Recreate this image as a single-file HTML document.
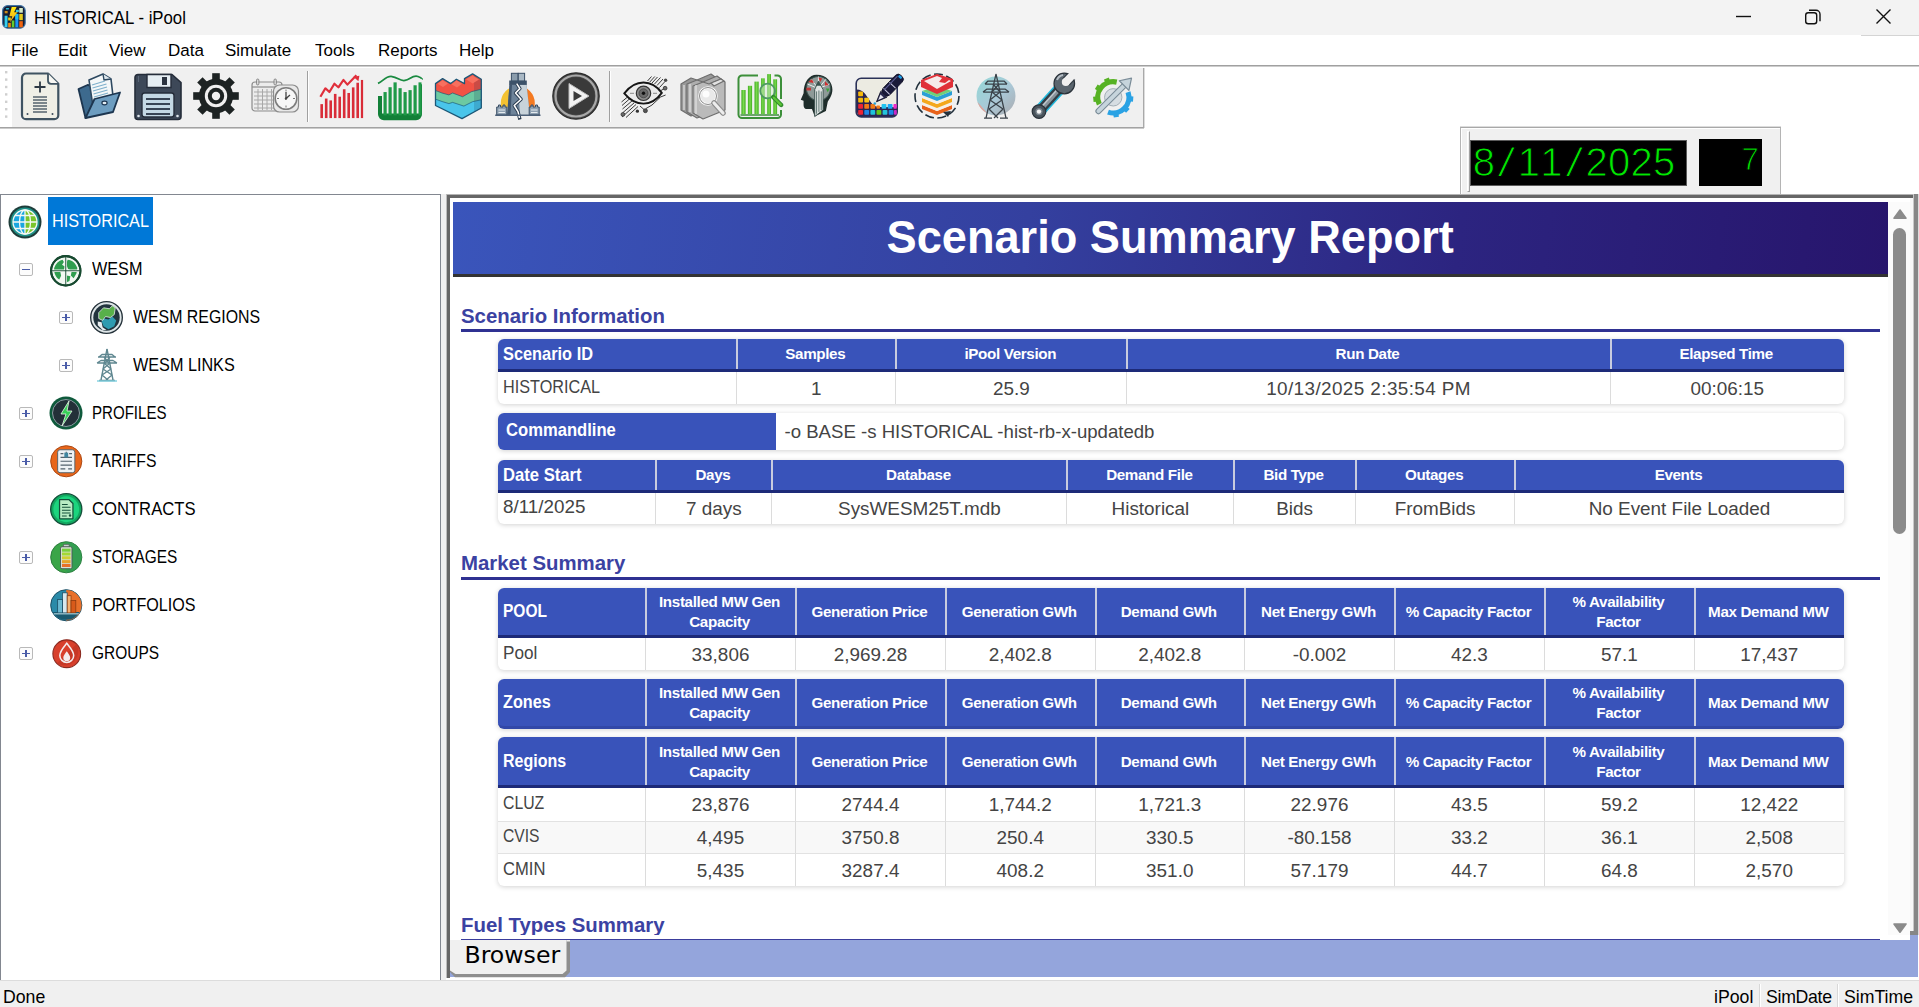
<!DOCTYPE html>
<html lang="en">
<head>
<meta charset="utf-8">
<title>HISTORICAL - iPool</title>
<style>
*{box-sizing:border-box;margin:0;padding:0}
html,body{width:1919px;height:1007px;overflow:hidden;background:#fff}
body{position:relative;font-family:"Liberation Sans",sans-serif;color:#000}
.abs{position:absolute}
/* ---------- title bar ---------- */
#titlebar{left:0;top:0;width:1919px;height:35px;background:#f3f3f3}
#titlebar .ttl{left:34px;top:7px;font-size:18.800px;transform:scaleX(.893);transform-origin:0 50%;line-height:22px;color:#000;white-space:nowrap}
/* ---------- menu ---------- */
#menubar{left:0;top:35px;width:1919px;height:30px;background:#fff}
#menubar span{position:absolute;top:3.600px;font-size:17.400px;transform:scaleX(.977);transform-origin:0 50%;line-height:22px;white-space:nowrap}
#menuline{left:0;top:65px;width:1919px;height:3px;background:linear-gradient(#a0a0a0 0,#a0a0a0 1px,#cdcdcd 1px,#cdcdcd 2px,#fff 2px,#fff 3px)}
/* ---------- toolbar ---------- */
#toolbar{left:0;top:68px;width:1144px;height:60px;background:#f0f0f0;border-right:1px solid #a9a9a9;border-bottom:1px solid #a3a3a3;box-shadow:0 1px 0 #cbcbcb,1px 0 0 #dcdcdc}
.ic{position:absolute;top:4px;width:48px;height:48px;overflow:visible}
.sep{position:absolute;top:3px;width:2px;height:51px;background:#a0a0a0;border-right:1px solid #fff}
/* ---------- LED ---------- */
#ledbox{left:1460px;top:126.500px;width:321px;height:68.500px;background:#f0f0f0;border-top:1px solid #a8a8a8;border-left:1px solid #b4b4b4;border-right:1px solid #b4b4b4;box-shadow:inset 1px 1px 0 #fff,0 -1px 0 #dcdcdc}
.led{background:#000;border:1px solid #5a5a5a;white-space:nowrap;overflow:hidden;font-size:0}
.led b{display:inline-block;width:22.550px;text-align:center;font-weight:normal;font-size:40px;line-height:43px;color:#00e800;-webkit-text-stroke:1px #000;vertical-align:top}
.led b.sm{font-size:31px;width:18px;line-height:42px}
.led b.sl{transform:skewX(-9deg) scaleX(1.15)}
/* ---------- left tree ---------- */
#tree{left:0;top:194px;width:441px;height:787px;background:#fff;border:1px solid #828790}
.node{position:absolute;margin:2px 0 0 1px;font-size:18px;line-height:22px;white-space:nowrap;color:#000}
.node i{font-style:normal;display:inline-block;transform:scaleX(.9);transform-origin:0 50%}
.ti{position:absolute;width:34px;height:34px;overflow:visible;margin:2px 0 0 1px}
.xb{position:absolute;width:13.400px;height:13.400px;border:1px solid #b9b9b9;border-radius:2px;background:#fcfcfc;margin:1px 0 0 .300px}
.xb .h{position:absolute;left:2px;top:5px;width:7.400px;height:1.400px;background:#4a5ca8}
.xb .v{position:absolute;left:5px;top:2px;width:1.400px;height:7.400px;background:#4a5ca8}
/* ---------- right panel ---------- */
#right{left:446px;top:194px;width:1473px;height:787px;background:#fff;border-style:solid;border-width:4px 0 0 4px;border-color:#666}
#rhead{left:3px;top:4px;width:1435px;height:75px;border-bottom:3px solid #333;background:linear-gradient(97deg,#3a55bb 0%,#34409f 40%,#2c2480 70%,#27156c 100%);color:#fff;text-align:center;font-weight:bold;font-size:47px;line-height:70px;white-space:nowrap}
#rhead span{display:inline-block;transform:scaleX(.961)}
.sec{position:absolute;left:11px;font-size:20.400px;line-height:28px;font-weight:bold;color:#3b42a2;white-space:nowrap}
.secline{position:absolute;left:11px;width:1419px;height:3px;background:#2f3192}
.rt{position:absolute;left:47.500px;width:1346px;border-collapse:separate;border-spacing:0;table-layout:fixed;border-radius:6px;box-shadow:0 1px 5px rgba(0,0,0,.18);background:#fff}
.rt th{background:#3953ba;color:#fff;font-weight:bold;font-size:15.200px;letter-spacing:-.35px;line-height:20px;text-align:center;padding:0 1px 0 0;border-bottom:3px solid #1d2a78;box-shadow:inset 2px 0 0 #c8ccdf;vertical-align:middle;white-space:nowrap}
.rt th.l{text-align:left;padding-left:5px;letter-spacing:0;font-size:17.800px;box-shadow:none;border-top-left-radius:6px}
.sx{display:inline-block;transform-origin:0 50%;white-space:nowrap}
.rt th:last-child{border-top-right-radius:6px}
.rt .h1 th{height:33.100px}
.rt .h2 th{height:50.100px;padding-top:2px}
.rt .h3 th{height:50.800px;padding-top:2px}
.rt .h2 th.l,.rt .h3 th.l{padding-top:0}
.rt.only th{border-bottom:3px solid #3248a8}
.rt.only th.l{border-bottom-left-radius:6px}
.rt.only th:last-child{border-bottom-right-radius:6px}
.rt td{height:31.300px;font-size:18.900px;line-height:22px;color:#444;text-align:center;padding:1.500px 0 0;border-left:1px solid #dcdcdc;white-space:nowrap;vertical-align:middle}
.rt td.l{text-align:left;padding:0 0 2px 5px;border-left:none}
.rt .r3 td{height:32.600px;border-top:1px solid #e2e2e2}
.rt .r3:nth-child(2) td{border-top:none}
.rt .alt td{background:#f8f8f8}
.rt.pool td{height:31.800px}
.cmd{position:absolute;left:47.500px;width:1346px;height:37px;border-radius:6px;box-shadow:0 1px 5px rgba(0,0,0,.18);background:#fff}
.cmd .cl{position:absolute;left:0;top:0;width:278px;height:37px;background:#3953ba;border-radius:6px 0 0 6px;color:#fff;font-weight:bold;font-size:17.800px;line-height:35px;padding-left:8px}
.cmd .cv{position:absolute;left:287px;top:0;font-size:18.600px;line-height:38px;color:#444;white-space:nowrap}
#tabbar{left:0;top:737px;width:1468px;height:42px;background:#94a5dc}
.tab{position:absolute;left:14.500px;top:4.600px;font-family:"DejaVu Sans","Liberation Sans",sans-serif;font-size:23.600px;line-height:30px;color:#000;white-space:nowrap}
/* ---------- status ---------- */
#status{left:0;top:980px;width:1919px;height:27px;background:#f0f0f0;border-top:1px solid #dcdcdc}
#status span{position:absolute;top:5px;font-size:17.700px;line-height:22px;white-space:nowrap}
#status i{position:absolute;top:3px;width:2px;height:23px;background:#d8d8d8;border-right:1px solid #fff}
</style>
</head>
<body>
<div id="titlebar" class="abs"><svg class="abs" style="left:2.200px;top:5px" width="23.800" height="23.800" viewBox="0 0 24 24"><defs><linearGradient id="ab" x1="0" y1="0" x2="0" y2="1"><stop offset="0" stop-color="#ffe812"/><stop offset="1" stop-color="#f5a614"/></linearGradient></defs><rect x=".6" y=".6" width="22.800" height="22.800" rx="5.200" fill="#151c33" stroke="#3f73a4" stroke-width="1.200"/><rect x="2.600" y="10.800" width="3" height="11.400" fill="#34d0f0"/><rect x="6.200" y="12.600" width="2.700" height="3" fill="#e8cc18"/><rect x="6.200" y="18" width="2.700" height="4.500" fill="#f08a12"/><rect x="9.800" y="15.600" width="2.700" height="6.900" fill="#62cc30"/><rect x="13.400" y="9" width="3.100" height="13.500" fill="#1c94f6"/><rect x="13.400" y="9" width="3.100" height="5.500" fill="#22bdf0"/><rect x="17.400" y="3" width="3.600" height="4.800" fill="#d6ebc6"/><rect x="17.400" y="9" width="3.600" height="6.300" fill="#e6cc1c"/><rect x="17.400" y="16.300" width="3.600" height="6.200" fill="#f0640f"/><rect x="3.800" y="3" width="3.400" height="1.500" rx=".7" fill="#2ab8d0"/><rect x="2.700" y="6" width="3" height="2.400" fill="#c88a18"/><rect x="14" y="4.800" width="3" height="2.600" rx=".8" fill="#3ccfe0"/><path d="M9.800 2.100h4.900l-2.500 5.300h3.400l-7.800 10.600 2.600-6.600h-3z" fill="url(#ab)"/></svg><div class="abs ttl">HISTORICAL - iPool</div>
<svg class="abs" style="left:1730px;top:4px" width="170" height="26" viewBox="0 0 170 26"><g fill="none" stroke="#111" stroke-width="1.400"><path d="M6 12.500h15"/><rect x="75.700" y="8.700" width="11" height="11" rx="2.500"/><path d="M79 6.200h7a4 4 0 0 1 4 4v7"/><path d="M146.500 5.500l14 14M160.500 5.500l-14 14"/></g></svg></div>
<div id="menubar" class="abs">
<span style="left:11px">File</span><span style="left:58px">Edit</span><span style="left:109px">View</span><span style="left:168px">Data</span><span style="left:225px">Simulate</span><span style="left:315px">Tools</span><span style="left:378px">Reports</span><span style="left:459px">Help</span>
</div>
<div class="abs" style="left:1861px;top:35px;width:58px;height:1px;background:#d4d4d4"></div>
<div id="menuline" class="abs"></div>
<div id="toolbar" class="abs">
<div class="abs" style="left:0;top:0;width:12px;height:59px;background:#fff"></div>
<svg class="abs" style="left:2px;top:.200px" width="8" height="56" viewBox="0 0 8 56"><g fill="#cfcfcf"><rect x="3" y="3" width="2.4" height="2.4"/><rect x="3" y="10.4" width="2.4" height="2.4"/><rect x="3" y="17.8" width="2.4" height="2.4"/><rect x="3" y="25.2" width="2.4" height="2.4"/><rect x="3" y="32.6" width="2.4" height="2.4"/><rect x="3" y="40" width="2.4" height="2.4"/><rect x="3" y="47.4" width="2.4" height="2.4"/></g></svg>
<!-- 1 new doc -->
<svg class="ic" style="left:16.4px" viewBox="0 0 48 48"><path d="M10 1.500h22l10.300 10.300v31.400a4 4 0 0 1-4 4H10a4 4 0 0 1-4-4V5.500a4 4 0 0 1 4-4z" fill="#efefe6" stroke="#3f5361" stroke-width="2.200" stroke-linejoin="round"/><path d="M32 1.500v7.300a3 3 0 0 0 3 3h7.300" fill="#f8f8f4" stroke="#3f5361" stroke-width="1.800" stroke-linejoin="round"/><path d="M24 9.500v11M18.500 15h11" stroke="#2d3944" stroke-width="1.800"/><g stroke="#56646e" stroke-width="1.400"><path d="M17 25h14M17 28h14M17 31h14M17 34h14M17 37h14M17 40h14"/></g><circle cx="11.5" cy="42" r="1" fill="#3b4a5a"/><circle cx="36.500" cy="42" r="1" fill="#3b4a5a"/></svg>
<!-- 2 open folder -->
<svg class="ic" style="left:75px" viewBox="0 0 48 48"><path d="M3.500 17l9-4 6 1 3 28-11 4z" fill="#3d6a8e" stroke="#1d3650" stroke-width="1.8" stroke-linejoin="round"/><path d="M14 8l14-6 8 5 3 26-20 8z" fill="#f4f7f8" stroke="#2d4860" stroke-width="1.6" stroke-linejoin="round"/><path d="M28 2l1 6 7-1" fill="#dfe8ee" stroke="#2d4860" stroke-width="1.4" stroke-linejoin="round"/><g stroke="#7fb0cc" stroke-width="1.3"><path d="M17 13l13-4M17.500 16l14-4M18 19l14-4M18.500 22l14-4M19 25l14-4M19.500 28l14-4"/></g><path d="M10.500 46l9-19 25.500-6.500-7 19.500z" fill="#6d9dc0" stroke="#1d3650" stroke-width="1.8" stroke-linejoin="round"/><ellipse cx="29.500" cy="31" rx="2.600" ry="1.800" fill="#e4edf3" stroke="#1d3650" stroke-width="1.2"/></svg>
<!-- 3 floppy -->
<svg class="ic" style="left:133.600px" viewBox="0 0 48 48"><path d="M4 2.500h34l9 8v34a3 3 0 0 1-3 3H4a3 3 0 0 1-3-3v-39a3 3 0 0 1 3-3z" fill="#3d4858" stroke="#252d3a" stroke-width="1.6" stroke-linejoin="round"/><path d="M13 2.500h24v13H13z" fill="#e6eef3" stroke="#252d3a" stroke-width="1.4"/><rect x="28" y="5" width="5" height="8" fill="#2b3340"/><rect x="8" y="21" width="32" height="24" rx="2.500" fill="#c4d8e4" stroke="#252d3a" stroke-width="1.4"/><g stroke="#384454" stroke-width="1.800"><path d="M12 27h24M12 32h24M12 37h24M12 42h24"/></g><circle cx="4.500" cy="44" r="1.300" fill="#dfe6ec"/><circle cx="43.500" cy="44" r="1.300" fill="#dfe6ec"/><path d="M4.500 4v6" stroke="#596678" stroke-width="1"/></svg>
<!-- 4 gear -->
<svg class="ic" style="left:192.200px" viewBox="0 0 48 48"><g fill="#1d2323"><g transform="translate(24 24)"><rect x="-3.800" y="-22.800" width="7.600" height="45.600"/><rect x="-3.800" y="-22.800" width="7.600" height="45.600" transform="rotate(45)"/><rect x="-3.800" y="-22.800" width="7.600" height="45.600" transform="rotate(90)"/><rect x="-3.800" y="-22.800" width="7.600" height="45.600" transform="rotate(135)"/><circle r="17.200"/></g></g><circle cx="24" cy="24" r="11.200" fill="#f0f0f0"/><circle cx="24" cy="24" r="8.200" fill="#1d2323"/><circle cx="24" cy="24" r="4.200" fill="#f0f0f0"/></svg>
<!-- 5 calendar clock -->
<svg class="ic" style="left:250.800px" viewBox="0 0 48 48"><rect x="1" y="10" width="30" height="29" rx="3" fill="#ececec" stroke="#8b8b8b" stroke-width="1.2"/><path d="M1 15h30" stroke="#8b8b8b" stroke-width="1.200"/><g stroke="#a8a8a8" stroke-width="1"><path d="M3 20h26M3 24h26M3 28h26M3 32h26M3 36h26M7 17v21M11.500 17v21M16 17v21M20.500 17v21"/></g><rect x="5.500" y="7" width="2.400" height="6" rx="1.200" fill="#d8d8d8" stroke="#777" stroke-width=".8"/><rect x="23" y="7" width="2.400" height="6" rx="1.200" fill="#d8d8d8" stroke="#777" stroke-width=".8"/><rect x="22.500" y="13" width="25" height="27" rx="6" fill="#e8e8e8" stroke="#8b8b8b" stroke-width="1.200"/><circle cx="35" cy="26.500" r="10.800" fill="#f7f7f7" stroke="#7c7c7c" stroke-width="1.500"/><g stroke="#777" stroke-width="1"><path d="M35 17.500v2M35 33.500v2M26 26.500h2M42 26.500h2"/></g><path d="M35 20v6.500l4-3.500" fill="none" stroke="#444" stroke-width="1.300"/><circle cx="35" cy="26.500" r="1.200" fill="#444"/></svg>
<div class="sep" style="left:307px"></div>
<!-- 6 red chart -->
<svg class="ic" style="left:317.200px" viewBox="0 0 48 48"><g transform="translate(1.400 3.300) scale(1 .93)"><g fill="#d92c38"><rect x="2" y="31" width="2.600" height="15"/><rect x="6.500" y="25" width="2.600" height="21"/><rect x="11" y="27" width="2.600" height="19"/><rect x="15.500" y="20" width="2.600" height="26"/><rect x="20" y="23" width="2.600" height="23"/><rect x="24.500" y="15" width="2.600" height="31"/><rect x="29" y="19" width="2.600" height="27"/><rect x="33.500" y="13" width="2.600" height="33"/><rect x="38" y="8" width="2.600" height="38"/><rect x="42.500" y="5" width="2.200" height="41"/></g><path d="M2 23l5-9 4 4 5-9 4 4 5-8 4 5 9-10" fill="none" stroke="#e02f3b" stroke-width="2.200" stroke-linejoin="round"/><path d="M35 1.500l6-1-1 6z" fill="#e02f3b"/></g></svg>
<!-- 7 green chart -->
<svg class="ic" style="left:375.800px" viewBox="0 0 48 48"><g transform="translate(0 2.600) scale(1 .97)"><path d="M2 22h4v18h37V10h3v31a6 6 0 0 1-6 6H8a6 6 0 0 1-6-6z" fill="#128038"/><g fill="#1f9a48"><rect x="7.500" y="18" width="3.200" height="24"/><rect x="12.500" y="13" width="3.200" height="29"/><rect x="17.500" y="8" width="3.200" height="34"/><rect x="22.500" y="14" width="3.200" height="28"/><rect x="27.500" y="18" width="3.200" height="24"/><rect x="32.500" y="16" width="3.200" height="26"/><rect x="37.500" y="11" width="3.200" height="31"/><rect x="42.500" y="8" width="3" height="34"/></g><path d="M2 9c5-2 8-8 14-7s8 5 13 4 8-6 13-4 4 3 4 3" fill="none" stroke="#1a8a40" stroke-width="1.800"/></g></svg>
<!-- 8 layers -->
<svg class="ic" style="left:434.400px" viewBox="0 0 48 48"><defs><clipPath id="c8"><path d="M1.500 11.600L8.600 6.600 16.700 11.600 22.400 7.200 30.500 11.600V6.600L38.600 1.900 47.300 7.200V36L28 46.600 1.500 33.500z"/></clipPath></defs><g clip-path="url(#c8)"><rect width="48" height="48" fill="#f15244"/><path d="M0 17.900L8 21 14.900 22.900 18.600 21 28.600 24.700 37.400 19.700 48 17V48H0z" fill="#6cc9a2"/><path d="M0 26.600L8 29.500 14.900 31.600 18.600 30.400 29.900 34.100 38.600 29.700 48 27.600V48H0z" fill="#49c5ea"/><path d="M40 0H48V48H40z" fill="#0a2a50" opacity=".17"/><path d="M3.500 11.800L8.600 8.200 14 11.400 9 15z" fill="#f7705f"/><path d="M17.500 12.200L22.400 8.600 28 11.800 23 15.500z" fill="#f7705f"/><path d="M32 7.200L38.600 3.400 45 7.400 38.600 11.400z" fill="#f7705f"/><path d="M0 17.900L8 21 14.900 22.900 18.600 21 28.600 24.700 37.400 19.700 48 17M0 26.600L8 29.500 14.900 31.600 18.600 30.400 29.900 34.100 38.600 29.700 48 27.600" fill="none" stroke="#1d5878" stroke-width=".9" opacity=".75"/></g><path d="M1.500 11.600L8.600 6.600 16.700 11.600 22.400 7.200 30.500 11.600V6.600L38.600 1.900 47.300 7.200V36L28 46.600 1.500 33.500z" fill="none" stroke="#1d5878" stroke-width="1.300" stroke-linejoin="round"/></svg>
<!-- 9 dam tower -->
<svg class="ic" style="left:493px" viewBox="0 0 48 48"><path d="M24.800 14a17 17 0 0 0-17 17c0 2 .3 3 .6 4.500H24.800z" fill="#f4c232"/><path d="M24.800 14a17 17 0 0 1 17 17c0 2-.3 3-.6 4.500H24.800z" fill="#f47a22"/><path d="M16.500 12.500H33.500L36.900 43H14.100z" fill="#6d8399"/><path d="M25 12.500H33.500L36.900 43H27z" fill="#c8d3da"/><path d="M14.100 43L16.500 12.500H19L17.500 43z" fill="#40566e"/><rect x="18.400" y="1.300" width="6.600" height="8" fill="#8a9cac" stroke="#3a4f66" stroke-width="1"/><rect x="25.300" y="1.300" width="6.300" height="8" fill="#a9b8c4" stroke="#3a4f66" stroke-width="1"/><rect x="16.200" y="8.500" width="17.600" height="4.400" fill="#3c5269"/><path d="M23.700 11.600L26.900 16.600 22.500 21 28.100 27.200 21.200 33.500 25 39.700 26.900 47.500" fill="none" stroke="#2a3c50" stroke-width="3.400" stroke-linejoin="round"/><path d="M23.700 11.600L26.900 16.600 22.500 21 28.100 27.200 21.200 33.500 25 39.700 26.500 46" fill="none" stroke="#fff" stroke-width="1.500" stroke-linejoin="round"/><path d="M3.700 43V35H5.500V33H7.500V35H10V33H12V35H13.800V43z" fill="#8fa1b2" stroke="#3a4f66" stroke-width="1"/><path d="M36.200 43V35H38V33H40V35H42.500V33H44.500V35H46.200V43z" fill="#8fa1b2" stroke="#3a4f66" stroke-width="1"/><path d="M5.500 38h6.500M5.500 40.500h6.500M38 38h6.500M38 40.500h6.500" stroke="#e4eaee" stroke-width="1.200"/><path d="M2.200 43.300H47.500" stroke="#4c6078" stroke-width="1.600"/></svg>
<!-- 10 play -->
<svg class="ic" style="left:551.600px" viewBox="0 0 48 48"><circle cx="24" cy="24" r="23.200" fill="#4a4a4a" stroke="#2b2b2b" stroke-width="1.200"/><circle cx="24" cy="24" r="20.500" fill="none" stroke="#a9a9a9" stroke-width="2.200"/><circle cx="24" cy="24" r="18.800" fill="#3a3a3a"/><path d="M17 11.500l20 12.500-20 12.500z" fill="#f2f2f2" stroke="#bdbdbd" stroke-width="1"/><path d="M21.500 19l8.500 5-8.500 5z" fill="#3a3a3a"/></svg>
<div class="sep" style="left:609px"></div>
<!-- 11 eye -->
<svg class="ic" style="left:619.900px" viewBox="0 0 48 48"><g stroke="#3a3a3a" stroke-width="1" fill="none"><path d="M27.500 9l4-4.500M29.800 10l5-5.500M32 11l5.500-6M34.500 12l6-6.500M37 13.500l6-6.500M39.500 15.500l5.500-6M41 18.500l4-2.300M38 26l7.600-3"/><path d="M1.500 30l6-5M2 33.500l8-7M2.500 37l10-8.500M3 40.500l11-9.500M2 45l14-12.500M6 45.500l12-11M20 34l4 3.500"/><path d="M26 36.500l6-3.500 8-7.500"/></g><circle cx="45.600" cy="8.200" r="1.700" fill="#4a4a4a"/><circle cx="45.100" cy="16.200" r="1.900" fill="#6a6a6a" stroke="#333" stroke-width=".8"/><circle cx="17.400" cy="39.200" r="1.600" fill="#333"/><circle cx="25.400" cy="38.700" r="2" fill="#555" stroke="#333" stroke-width=".8"/><circle cx="2.900" cy="42.400" r="1.900" fill="#6a6a6a" stroke="#333" stroke-width=".8"/><path d="M4.300 21.300c5.500-7 12-10.800 19.200-10.800s13.500 3.800 18.300 10.400c-5 7-11 10.700-18.300 10.700S9.800 28 4.300 21.300z" fill="#ececec" stroke="#161616" stroke-width="1.900"/><circle cx="23.500" cy="21.300" r="7.200" fill="#8d8d8d" stroke="#333" stroke-width="1.200"/><circle cx="23.500" cy="21.300" r="4.500" fill="#6a6a6a" stroke="#444" stroke-width=".8"/><circle cx="23.500" cy="21.300" r="1.700" fill="#111"/><path d="M10 21.300h4M33 21.300h4" stroke="#8a8a8a" stroke-width="1"/></svg>
<!-- 12 folders magnifier -->
<svg class="ic" style="left:678.500px" viewBox="0 0 48 48"><g stroke="#6e6e6e" stroke-width="1.200" stroke-linejoin="round"><path d="M2 12l10-6 6 2 14-6 4 3v30L12 44 2 38z" fill="#989898"/><path d="M8 12l10-4 6 2 14-6 4 3v30L18 46 8 40z" fill="#aeaeae"/><path d="M14 14l10-4 6 2 12-5 4 3v28L24 47l-10-6z" fill="#bababa"/><path d="M32 11l10-4 3 2-10 5z" fill="#e2e2e2"/></g><path d="M5 13v25M11 12v28M17 13v29" stroke="#e4e4e4" stroke-width="1.500" opacity=".8"/><circle cx="29" cy="24" r="8.500" fill="#e9e9e9" stroke="#fafafa" stroke-width="2.600"/><circle cx="29" cy="24" r="8.500" fill="none" stroke="#8c8c8c" stroke-width="1"/><circle cx="27" cy="22" r="3.500" fill="#fdfdfd"/><path d="M35 31l9 10" stroke="#8c8c8c" stroke-width="5.500" stroke-linecap="round"/><path d="M35 31l9 10" stroke="#ededed" stroke-width="3.200" stroke-linecap="round"/></svg>
<!-- 13 green chart magnifier -->
<svg class="ic" style="left:737.100px" viewBox="0 0 48 48"><defs><linearGradient id="g13" x1="0" y1="0" x2="1" y2="0"><stop offset="0" stop-color="#3fae1e"/><stop offset=".5" stop-color="#7ad84e"/><stop offset="1" stop-color="#3fae1e"/></linearGradient></defs><path d="M21 3.500H5a3.500 3.500 0 0 0-3.500 3.500v35.500A3.500 3.500 0 0 0 5 46H40.500A3.500 3.500 0 0 0 44 42.500V38M44 27V7a3.500 3.500 0 0 0-3.500-3.500H37.500" fill="none" stroke="#3c8f3a" stroke-width="2"/><g fill="url(#g13)"><rect x="4.400" y="18" width="4.200" height="24"/><rect x="10.900" y="13.800" width="4.200" height="28.200"/><rect x="17.500" y="9.600" width="4.200" height="32.400"/><rect x="24.100" y="6.300" width="3.600" height="35.700"/><rect x="30.200" y="2.100" width="3.800" height="39.900"/><rect x="36.300" y="7.300" width="3.800" height="34.700"/></g><path d="M3.500 43h38.500" stroke="#3c8f3a" stroke-width="1.300"/><circle cx="30.600" cy="19" r="7.400" fill="#d8ecd4" fill-opacity=".45" stroke="#4f9a62" stroke-width="1.800"/><path d="M36.200 25l8 8" stroke="#2f8a2c" stroke-width="4.400" stroke-linecap="round"/><path d="M36.800 25.600l7 7" stroke="#5cc436" stroke-width="2.200" stroke-linecap="round"/></svg>
<!-- 14 head -->
<svg class="ic" style="left:795.700px" viewBox="0 0 48 48"><g transform="translate(-.8 .8) scale(.93)"><path d="M23 2c11 0 17 8 17 16 0 6-3 10-5 13l-2 10-12 6-3-8h-6c-2 0-3-2-3-4v-5l-3-1 3-7c0-12 6-20 14-20z" fill="#1f2d2b"/><circle cx="25" cy="17" r="13" fill="#8e9a98" stroke="#39504c" stroke-width="1.200"/><g stroke="#f3f3f3" stroke-width="1"><path d="M25 17L13 12M25 17L17 7M25 17l0-13M25 17l8-10M25 17l12-5"/></g><path d="M14 10l4-3 2 4z" fill="#cf2e2e"/><path d="M25 5l4 1-2 4z" fill="#cf2e2e"/><path d="M32 9l4 4-4 1z" fill="#cf2e2e"/><path d="M33 17l4 0-2 4z" fill="#3ba23b"/><path d="M12 16l5 0 0 3-5 0z" fill="#c23a3a"/><path d="M25 9l5 9v22l-9 7V18z" fill="#dfe3e2" stroke="#39504c" stroke-width="1"/><path d="M23 20v24M25.500 19v23M28 20v20" stroke="#55706b" stroke-width="1"/><path d="M25 9l3 5h-6z" fill="#39504c"/></g></svg>
<!-- 15 palette pen -->
<svg class="ic" style="left:854.300px" viewBox="0 0 48 48"><rect x="2.200" y="6.300" width="41" height="38.600" rx="5" fill="#ecebe2" stroke="#2a3158" stroke-width="1.600"/><path d="M3 17.500c6 .5 9 5 12 10s6 7.500 10 7.500h18V40a4.200 4.200 0 0 1-4.200 4.200H7.200A4.200 4.200 0 0 1 3 40z" fill="#2a2452"/><g><rect x="4.200" y="19.500" width="4.800" height="4.800" rx=".8" fill="#f7b90a"/><rect x="4.200" y="25.700" width="4.800" height="4.800" rx=".8" fill="#f7b90a"/><rect x="10.300" y="25.700" width="4.800" height="4.800" rx=".8" fill="#f7c518"/><rect x="4.200" y="31.900" width="4.800" height="4.800" rx=".8" fill="#ee2434"/><rect x="10.300" y="31.900" width="4.800" height="4.800" rx=".8" fill="#f47a16"/><rect x="16.400" y="31.900" width="4.800" height="4.800" rx=".8" fill="#f47a16"/><rect x="22.500" y="33.500" width="3.500" height="3.200" rx=".8" fill="#f47a16"/><rect x="27.600" y="31.900" width="4.800" height="4.800" rx=".8" fill="#22c4f0"/><rect x="33.700" y="31.900" width="4.800" height="4.800" rx=".8" fill="#1ca8f4"/><rect x="39.400" y="31.900" width="3.400" height="4.800" rx=".8" fill="#ee2cc8"/><rect x="4.200" y="38" width="4.800" height="4.800" rx=".8" fill="#ee2434"/><rect x="10.300" y="38" width="4.800" height="4.800" rx=".8" fill="#1c86e8"/><rect x="16.400" y="38" width="4.800" height="4.800" rx=".8" fill="#1cc4dc"/><rect x="22.500" y="38" width="4.800" height="4.800" rx=".8" fill="#64c818"/><rect x="28.600" y="38" width="4.800" height="4.800" rx=".8" fill="#22c4dc"/><rect x="34.700" y="38" width="4.800" height="4.800" rx=".8" fill="#1c86e8"/><rect x="40" y="38" width="2.800" height="4.800" rx=".8" fill="#c828c8"/></g><g transform="rotate(44 22 30)"><rect x="17.500" y="-6.500" width="9.500" height="25.500" rx="4" fill="#1a1a3a" stroke="#0e0e24" stroke-width=".8"/><path d="M18 19h8.500L22.200 29.500z" fill="#2a2a50" stroke="#0e0e24" stroke-width=".8"/><path d="M20 21.500h4.500L22.200 27z" fill="#e8e8f0"/><path d="M18 6.500h8.500M18 15h8.500" stroke="#c8c8e0" stroke-width="1"/><path d="M19.500 -3.500v19" stroke="#5a5a90" stroke-width="1.200"/><rect x="20" y="-6" width="4" height="2.500" rx="1" fill="#1ea0e8"/></g><circle cx="20.800" cy="31.500" r="1.300" fill="#2aa4d8"/></svg>
<!-- 16 stack -->
<svg class="ic" style="left:912.900px" viewBox="0 0 48 48"><circle cx="24" cy="24" r="22" fill="none" stroke="#22303c" stroke-width="1.600" stroke-dasharray="9 3.500"/><path d="M9 33l15 6 15-6v4l-15 6-15-6z" fill="#e8621a"/><path d="M9 33l15-5 15 5-15 6z" fill="#f7f0e6"/><path d="M9 26l15 6 15-6v4l-15 6-15-6z" fill="#f4a81c"/><path d="M9 26l15-5 15 5-15 6z" fill="#f7f0e6"/><path d="M9 19l15 6 15-6v4l-15 6-15-6z" fill="#2a9fd6"/><path d="M9 19l15-5 15 5-15 6z" fill="#6fcf7a"/><path d="M8 8l16-6 16 5v8l-16 7-16-7z" fill="#e03038"/><path d="M11 9l13-5 5 2-3 4 6 1 4-3 2 1-14 8z" fill="#f6eaea"/><path d="M30 40l8-1-3 6z" fill="#22303c"/></svg>
<!-- 17 pylon -->
<svg class="ic" style="left:971.500px" viewBox="0 0 48 48"><defs><linearGradient id="pg" x1="0" y1="0" x2="1" y2="1"><stop offset="0" stop-color="#6fd0cf"/><stop offset=".55" stop-color="#8fb8cc"/><stop offset="1" stop-color="#8f8f96"/></linearGradient></defs><circle cx="24" cy="24" r="19.500" fill="url(#pg)" opacity=".72"/><path d="M5.500 30a19.500 19.500 0 0 0 10 11.500z" fill="#ee9a8c" opacity=".8"/><g fill="none" stroke="#3a4249" stroke-width="1.250" stroke-linejoin="round"><path d="M24 2L14 46M24 2l10 44M12 46h8M28 46h8"/><path d="M13 12h22M11 20h26M13 12l3-3h16l3 3M11 20l4-3h18l4 3"/><path d="M21 12l7 8M27 12l-7 8M20 20l10 8M28 20l-10 8M18 28l13 9M30 28l-13 9M17 37l9 9M31 37l-9 9"/></g></svg>
<!-- 18 wrench -->
<svg class="ic" style="left:1030.100px" viewBox="0 0 48 48"><path d="M9 39.600L33 13" stroke="#22b8dc" stroke-width="12" stroke-linecap="round"/><path d="M9 39.600L33 13" stroke="#343e46" stroke-width="9"/><path d="M9.500 39L33 13" stroke="#89949c" stroke-width="4.200"/><path d="M11 35.500L30 14.500" stroke="#c2cad0" stroke-width="1.200"/><circle cx="34.300" cy="11.500" r="10.300" fill="#5a656e" stroke="#2a323a" stroke-width="1.200"/><path d="M27 8a8 8 0 0 1 6-5" fill="none" stroke="#b4bcc4" stroke-width="2"/><circle cx="35.800" cy="10" r="4" fill="#f0f0f0"/><path d="M35.800 10L45 .500" stroke="#f0f0f0" stroke-width="7.600"/><path d="M32.700 6.600L38 1.200M39.200 13.300L44.500 7.800" stroke="#2a323a" stroke-width="1"/><circle cx="9" cy="39.600" r="6.800" fill="#4a545c" stroke="#2a323a" stroke-width="1.200"/><circle cx="9" cy="39.600" r="3.600" fill="#7a858e"/><circle cx="9" cy="39.600" r="2.200" fill="#f6f6f6"/></svg>
<!-- 19 gear arrow -->
<svg class="ic" style="left:1088.700px" viewBox="0 0 48 48"><g transform="translate(24.500 25.300) scale(.87) translate(-23.300 -27)"><g transform="translate(23 27)"><path d="M-16 8A18 18 0 0 1 4-17.500" fill="none" stroke="#57b224" stroke-width="6"/><g fill="#57b224"><rect x="-3" y="-23" width="6" height="7" transform="rotate(-20)"/><rect x="-3" y="-23" width="6" height="7" transform="rotate(-58)"/><rect x="-3" y="-23" width="6" height="7" transform="rotate(-96)"/></g><path d="M17 -6A18 18 0 0 1 -6 17" fill="none" stroke="#2aa2e4" stroke-width="6"/><g fill="#2aa2e4"><rect x="-3" y="-23" width="6" height="7" transform="rotate(95)"/><rect x="-3" y="-23" width="6" height="7" transform="rotate(133)"/><rect x="-3" y="-23" width="6" height="7" transform="rotate(171)"/></g><circle r="10" fill="#d6dde2" stroke="#9aa6ae" stroke-width="1"/></g><path d="M6 43L36 13" stroke="#7a8c98" stroke-width="7" stroke-linecap="round"/><path d="M6 43L36 13" stroke="#c6d4dc" stroke-width="4.500" stroke-linecap="round"/><path d="M30 8l14-3-3 14z" fill="#c6d4dc" stroke="#7a8c98" stroke-width="1.400" stroke-linejoin="round"/></g></svg>

</div>

<div id="ledbox" class="abs">
<div class="abs" style="left:6px;top:3px;width:3px;height:61px;border-left:1px solid #fff;border-top:1px solid #fff;border-right:1px solid #a0a0a0;border-bottom:1px solid #a0a0a0"></div>
<div class="abs led" style="left:9px;top:12px;width:217px;height:46px;padding-left:1.500px"><b>8</b><b class="sl">/</b><b>1</b><b>1</b><b class="sl">/</b><b>2</b><b>0</b><b>2</b><b>5</b></div>
<div class="abs led" style="left:238px;top:11px;width:63px;height:47px;border:none;text-align:right;padding-right:3px"><b class="sm">7</b></div>
</div>
<div class="abs" style="left:441px;top:194px;width:5px;height:787px;background:#f0f0f0"></div>
<div id="tree" class="abs">
<div class="abs" style="left:47px;top:2.200px;width:105px;height:47.600px;background:#0078d7"></div>
<!-- root -->
<svg class="ti" style="left:6px;top:8px" viewBox="0 0 34 34"><circle cx="17" cy="17" r="16.500" fill="#1f3d3a"/><circle cx="17" cy="17" r="14.500" fill="#1d8f86"/><circle cx="17" cy="17" r="12" fill="#1aa6e0"/><path d="M17 5a12 12 0 0 1 0 24z" fill="#7ac52c"/><g fill="none" stroke="#f4f8f4" stroke-width="1.300"><circle cx="17" cy="17" r="12"/><ellipse cx="17" cy="17" rx="5.500" ry="12"/><path d="M17 5v24M5 17h24M7 10.500h20M7 23.500h20"/></g></svg>
<span class="node" style="left:50px;top:13px;color:#fff"><i style="transform:scaleX(0.9)">HISTORICAL</i></span>
<!-- WESM -->
<div class="xb" style="left:18px;top:67px"><b class="h"></b></div>
<svg class="ti" style="left:48px;top:57.500px;width:31.500px;height:31.500px" viewBox="0 0 34 34"><circle cx="17" cy="17" r="15.800" fill="#f2f8f2" stroke="#174a30" stroke-width="2.200"/><path d="M4.500 14c1.500-5 5-8 9-9l1.500 2.500-2 3 3 2-1 4-4 1 1 5-2 4c-3.500-2-6-7-5.500-12.500z" fill="#2f9e4e"/><path d="M19 5c5 .5 9 4 10.500 9l-1 6-3 5-3-3 1-5-4-2-2-5z" fill="#2f9e4e"/><path d="M18 22l4 1-1 5-3 1.500z" fill="#2f9e4e"/><path d="M17 1.500v31M1.500 17h31" stroke="#f2f8f2" stroke-width="2.600"/><path d="M17 1.500v31M1.500 17h31" stroke="#174a30" stroke-width="1"/><circle cx="17" cy="17" r="15.800" fill="none" stroke="#174a30" stroke-width="2.200"/></svg>
<span class="node" style="left:90px;top:61px"><i style="transform:scaleX(0.9)">WESM</i></span>
<!-- WESM REGIONS -->
<div class="xb" style="left:58px;top:115px"><b class="h"></b><b class="v"></b></div>
<svg class="ti" style="left:88px;top:103.500px;width:33px;height:33px" viewBox="0 0 34 34"><circle cx="17" cy="17" r="16.300" fill="#dfe6e8" stroke="#25323a" stroke-width="1.400"/><circle cx="17" cy="17" r="13.600" fill="#22343e"/><path d="M9 12l5-5 6 1 3-3 3 2-1 7-4 3-5-1-3 4-4-2z" fill="#58b04a"/><path d="M14 18l5 1 4-3 4 4-2 6-6 3-5-3-2-5z" fill="#2f9bb0"/><path d="M8 21l4 1 1 5 4 3-4 0-5-5z" fill="#e8eef0"/><path d="M9 12l5-5 6 1 3-3 3 2-1 7-4 3-5-1-3 4-4-2z" fill="none" stroke="#e8eef0" stroke-width=".8"/></svg>
<span class="node" style="left:130.500px;top:109px"><i style="transform:scaleX(0.883)">WESM REGIONS</i></span>
<!-- WESM LINKS -->
<div class="xb" style="left:58px;top:163px"><b class="h"></b><b class="v"></b></div>
<svg class="ti" style="left:87.500px;top:151px" viewBox="0 0 34 34"><g fill="none" stroke="#5f8790" stroke-width="1.400" stroke-linejoin="round"><path d="M17 1l-6 31M17 1l6 31M9 32.500h16"/><path d="M8 9h18M7 15h20M9 9l3-2.500h10l3 2.500M7 15l4-2.500h12l4 2.500"/><path d="M14 9l5 6M20 9l-5 6M14 15l7 6M20 15l-7 6M13 21l9 6M21 21l-9 6M12 27l6 5M22 27l-6 5"/></g><path d="M7 33h20" stroke="#7fd0e0" stroke-width="1.400"/></svg>
<span class="node" style="left:130.500px;top:157px"><i style="transform:scaleX(0.9)">WESM LINKS</i></span>
<!-- PROFILES -->
<div class="xb" style="left:18px;top:211px"><b class="h"></b><b class="v"></b></div>
<svg class="ti" style="left:46.500px;top:199px" viewBox="0 0 34 34"><circle cx="17" cy="17" r="16.500" fill="#0f5a3c"/><circle cx="17" cy="17" r="13.500" fill="#233038" stroke="#8a9aa0" stroke-width="1"/><path d="M20 5l-8 13h5l-4 12 10-15h-5z" fill="#38d058" stroke="#e8f4e8" stroke-width=".8" stroke-linejoin="round"/></svg>
<span class="node" style="left:90px;top:205px"><i style="transform:scaleX(0.837)">PROFILES</i></span>
<!-- TARIFFS -->
<div class="xb" style="left:18px;top:259px"><b class="h"></b><b class="v"></b></div>
<svg class="ti" style="left:48.300px;top:247.8px;width:32.500px;height:32.500px" viewBox="0 0 34 34"><circle cx="17" cy="17" r="16.300" fill="#e8661a" stroke="#a84410" stroke-width="1"/><rect x="8" y="5" width="18" height="24" rx="2.500" fill="#eef2f4" stroke="#52626c" stroke-width="1"/><g stroke="#52626c" stroke-width="1.200"><path d="M11 9h3M20 9h3M17 7v6M11 13h12M11 17h12M11 21h12M11 25h5M19 25h4"/></g><rect x="15" y="8" width="4" height="5" fill="#3f86a0"/></svg>
<span class="node" style="left:90px;top:253px"><i style="transform:scaleX(0.875)">TARIFFS</i></span>
<!-- CONTRACTS -->
<svg class="ti" style="left:48.300px;top:295.8px;width:32.500px;height:32.500px" viewBox="0 0 34 34"><circle cx="17" cy="17" r="16.300" fill="#12a860" stroke="#14503a" stroke-width="1.400"/><circle cx="17" cy="17" r="13.500" fill="#1cd47e"/><path d="M10 7h10l4 4v16H10z" fill="#b8ecc4" stroke="#14503a" stroke-width="1.300" stroke-linejoin="round"/><g stroke="#14503a" stroke-width="1.100"><path d="M12.500 12h6M12.500 15h9M12.500 18h9M12.500 21h9M12.500 24h5"/></g><circle cx="21" cy="23.500" r="1.300" fill="#14503a"/></svg>
<span class="node" style="left:90px;top:301px"><i style="transform:scaleX(0.924)">CONTRACTS</i></span>
<!-- STORAGES -->
<div class="xb" style="left:18px;top:355px"><b class="h"></b><b class="v"></b></div>
<svg class="ti" style="left:48.300px;top:343.8px;width:32.500px;height:32.500px" viewBox="0 0 34 34"><circle cx="17" cy="17" r="16.300" fill="#3aa548" stroke="#2a7a3c" stroke-width="1"/><path d="M17 1a16 16 0 0 1 0 32z" fill="#2f9a58" opacity=".6"/><rect x="14" y="3.500" width="6" height="3" fill="#c9d0d0" stroke="#5a6a60" stroke-width=".8"/><rect x="11" y="6" width="12" height="23" rx="1.500" fill="#d8e0d8" stroke="#4a5a50" stroke-width="1"/><rect x="12.500" y="8" width="9" height="3.200" fill="#7ad03a"/><rect x="12.500" y="12" width="9" height="3.200" fill="#a4d834"/><rect x="12.500" y="16" width="9" height="3.200" fill="#d0d030"/><rect x="12.500" y="20" width="9" height="3.200" fill="#e8a428"/><rect x="12.500" y="24" width="9" height="3.200" fill="#e87028"/></svg>
<span class="node" style="left:90px;top:349px"><i style="transform:scaleX(0.855)">STORAGES</i></span>
<!-- PORTFOLIOS -->
<svg class="ti" style="left:48.300px;top:391.8px;width:32.500px;height:32.500px" viewBox="0 0 34 34"><circle cx="17" cy="17" r="16.300" fill="#2a8aa8" stroke="#1a4a60" stroke-width="1"/><path d="M17 1a16 16 0 0 1 0 32z" fill="#e8702a"/><path d="M3 24h28a16 16 0 0 1-28 0z" fill="#1a5a70"/><rect x="13" y="4" width="5" height="21" fill="#d8e8ee" stroke="#1a4a60" stroke-width=".8"/><rect x="18" y="7" width="4" height="18" fill="#f4b070" stroke="#8a3a10" stroke-width=".8"/><rect x="8" y="11" width="5" height="14" fill="#6ab8d0" stroke="#1a4a60" stroke-width=".8"/><rect x="22" y="12" width="5" height="13" fill="#d85a1a" stroke="#8a3a10" stroke-width=".8"/><path d="M4 26h26" stroke="#c8e8f0" stroke-width="1"/></svg>
<span class="node" style="left:90px;top:397px"><i style="transform:scaleX(0.895)">PORTFOLIOS</i></span>
<!-- GROUPS -->
<div class="xb" style="left:18px;top:451px"><b class="h"></b><b class="v"></b></div>
<svg class="ti" style="left:49.500px;top:441.500px;width:29.500px;height:29.500px" viewBox="0 0 34 34"><circle cx="17" cy="17" r="16" fill="#d8402c" stroke="#8a2a20" stroke-width="1.200"/><path d="M6 28a16 16 0 0 0 22-22z" fill="#c03424" opacity=".7"/><path d="M17 5c4 5 8 9 8 14a8 8 0 0 1-16 0c0-5 4-9 8-14z" fill="none" stroke="#f4ecec" stroke-width="1.800"/><path d="M17 14c2 3 4 5 4 7.500a4 4 0 0 1-8 0c0-2.500 2-4.500 4-7.500z" fill="#f4ecec"/></svg>
<span class="node" style="left:90px;top:445px"><i style="transform:scaleX(0.859)">GROUPS</i></span>
</div>

<div id="right" class="abs">
<div id="rhead" class="abs"><span>Scenario Summary Report</span></div>
<!-- scrollbar + frame -->
<div class="abs" style="left:-4px;top:-4px;width:1472px;height:1px;background:#b4b4b4"></div>
<div class="abs" style="left:-4px;top:-4px;width:1px;height:784px;background:#bcbcbc"></div>
<div class="abs" style="left:1438px;top:4px;width:22px;height:738px;background:#fbfbfb"></div>
<div class="abs" style="left:1460px;top:0;width:3px;height:737px;background:#f7f7f7"></div>
<div class="abs" style="left:1463px;top:-4px;width:5px;height:741px;background:#868686;border-left:1px solid #c8c8c8"></div>
<div class="abs" style="left:1468px;top:-4px;width:1px;height:741px;background:#dcdcdc"></div>
<div class="abs" style="left:1460px;top:733px;width:8px;height:4px;background:#868686"></div>
<svg class="abs" style="left:1442px;top:10px" width="16" height="12" viewBox="0 0 16 12"><path d="M8 2L14 10.200H2z" fill="#8b8b8b" stroke="#8b8b8b" stroke-width="1.600" stroke-linejoin="round"/></svg>
<div class="abs" style="left:1442.700px;top:30px;width:13.200px;height:306px;border-radius:6.600px;background:#8b8b8b"></div>
<svg class="abs" style="left:1442px;top:724px" width="16" height="12" viewBox="0 0 16 12"><path d="M8 10.200L14 2H2z" fill="#8b8b8b" stroke="#8b8b8b" stroke-width="1.600" stroke-linejoin="round"/></svg>
<div class="abs" style="left:-4px;top:779.500px;width:4px;height:4px;background:#fff"></div>
<div class="sec" style="top:103.500px">Scenario Information</div>
<div class="secline" style="top:131px"></div>

<table class="rt" style="top:141.200px">
<colgroup><col style="width:238.800px"><col style="width:159px"><col style="width:231px"><col style="width:483.500px"><col style="width:233.700px"></colgroup>
<tr class="hd h1"><th class="l"><span class="sx" style="transform:scaleX(0.92)">Scenario ID</span></th><th>Samples</th><th>iPool Version</th><th>Run Date</th><th>Elapsed Time</th></tr>
<tr class="r"><td class="l"><span class="sx" style="transform:scaleX(0.858)">HISTORICAL</span></td><td>1</td><td>25.9</td><td style="letter-spacing:.4px">10/13/2025 2:35:54 PM</td><td>00:06:15</td></tr>
</table>

<div class="cmd" style="top:215px"><div class="cl"><span class="sx" style="transform:scaleX(0.934)">Commandline</span></div><div class="cv">-o BASE -s HISTORICAL -hist-rb-x-updatedb</div></div>

<table class="rt" style="top:261.700px">
<colgroup><col style="width:157.900px"><col style="width:116px"><col style="width:295px"><col style="width:167px"><col style="width:121.300px"><col style="width:159.800px"><col style="width:329px"></colgroup>
<tr class="hd h1"><th class="l"><span class="sx" style="transform:scaleX(0.936)">Date Start</span></th><th>Days</th><th>Database</th><th>Demand File</th><th>Bid Type</th><th>Outages</th><th>Events</th></tr>
<tr class="r"><td class="l"><span class="sx" style="transform:scaleX(0.997)">8/11/2025</span></td><td>7 days</td><td>SysWESM25T.mdb</td><td>Historical</td><td>Bids</td><td>FromBids</td><td>No Event File Loaded</td></tr>
</table>

<div class="sec" style="top:350.600px">Market Summary</div>
<div class="secline" style="top:378.700px"></div>

<table class="rt pool" style="top:389.800px">
<colgroup><col style="width:147.500px"><col style="width:150px"><col style="width:150px"><col style="width:149.500px"><col style="width:149.500px"><col style="width:150px"><col style="width:150px"><col style="width:150px"><col style="width:149.500px"></colgroup>
<tr class="hd h2"><th class="l"><span class="sx" style="transform:scaleX(0.873)">POOL</span></th><th>Installed MW Gen<br>Capacity</th><th>Generation Price</th><th>Generation GWh</th><th>Demand GWh</th><th>Net Energy GWh</th><th>% Capacity Factor</th><th>% Availability<br>Factor</th><th>Max Demand MW</th></tr>
<tr class="r"><td class="l"><span class="sx" style="transform:scaleX(0.907)">Pool</span></td><td>33,806</td><td>2,969.28</td><td>2,402.8</td><td>2,402.8</td><td>-0.002</td><td>42.3</td><td>57.1</td><td>17,437</td></tr>
</table>

<table class="rt only" style="top:480.600px">
<colgroup><col style="width:147.500px"><col style="width:150px"><col style="width:150px"><col style="width:149.500px"><col style="width:149.500px"><col style="width:150px"><col style="width:150px"><col style="width:150px"><col style="width:149.500px"></colgroup>
<tr class="hd h2"><th class="l"><span class="sx" style="transform:scaleX(0.912)">Zones</span></th><th>Installed MW Gen<br>Capacity</th><th>Generation Price</th><th>Generation GWh</th><th>Demand GWh</th><th>Net Energy GWh</th><th>% Capacity Factor</th><th>% Availability<br>Factor</th><th>Max Demand MW</th></tr>
</table>

<table class="rt" style="top:539.200px">
<colgroup><col style="width:147.500px"><col style="width:150px"><col style="width:150px"><col style="width:149.500px"><col style="width:149.500px"><col style="width:150px"><col style="width:150px"><col style="width:150px"><col style="width:149.500px"></colgroup>
<tr class="hd h3"><th class="l"><span class="sx" style="transform:scaleX(0.9)">Regions</span></th><th>Installed MW Gen<br>Capacity</th><th>Generation Price</th><th>Generation GWh</th><th>Demand GWh</th><th>Net Energy GWh</th><th>% Capacity Factor</th><th>% Availability<br>Factor</th><th>Max Demand MW</th></tr>
<tr class="r r3"><td class="l"><span class="sx" style="transform:scaleX(0.836)">CLUZ</span></td><td>23,876</td><td>2744.4</td><td>1,744.2</td><td>1,721.3</td><td>22.976</td><td>43.5</td><td>59.2</td><td>12,422</td></tr>
<tr class="r r3 alt"><td class="l"><span class="sx" style="transform:scaleX(0.828)">CVIS</span></td><td>4,495</td><td>3750.8</td><td>250.4</td><td>330.5</td><td>-80.158</td><td>33.2</td><td>36.1</td><td>2,508</td></tr>
<tr class="r r3"><td class="l"><span class="sx" style="transform:scaleX(0.878)">CMIN</span></td><td>5,435</td><td>3287.4</td><td>408.2</td><td>351.0</td><td>57.179</td><td>44.7</td><td>64.8</td><td>2,570</td></tr>
</table>

<div class="sec" style="top:712.700px">Fuel Types Summary</div>


<div id="tabbar" class="abs"><div class="abs" style="left:0;top:0;width:1460px;height:5px;background:#fff"></div><div class="abs" style="left:11px;top:3.500px;width:1419px;height:1.500px;background:#3a3d9c"></div><svg class="abs" style="left:0;top:5px" width="122" height="38" viewBox="0 0 122 38"><path d="M0 0H120V32L115 37.200H5L0 32z" fill="#8e8e8e"/><path d="M0 0H116.500V30.500L112.500 34H5.500L0 30.500z" fill="#f0f0f0"/><path d="M116.500 0H120V1.500H116.500z" fill="#f0f0f0"/></svg><div class="tab">Browser</div></div>
</div>

<div id="status" class="abs"><span style="left:3px">Done</span><span style="left:1714px">iPool</span><i style="left:1759px"></i><span style="left:1766px;letter-spacing:-.3px">SimDate</span><i style="left:1837px"></i><span style="left:1844px">SimTime</span></div>
</body>
</html>
